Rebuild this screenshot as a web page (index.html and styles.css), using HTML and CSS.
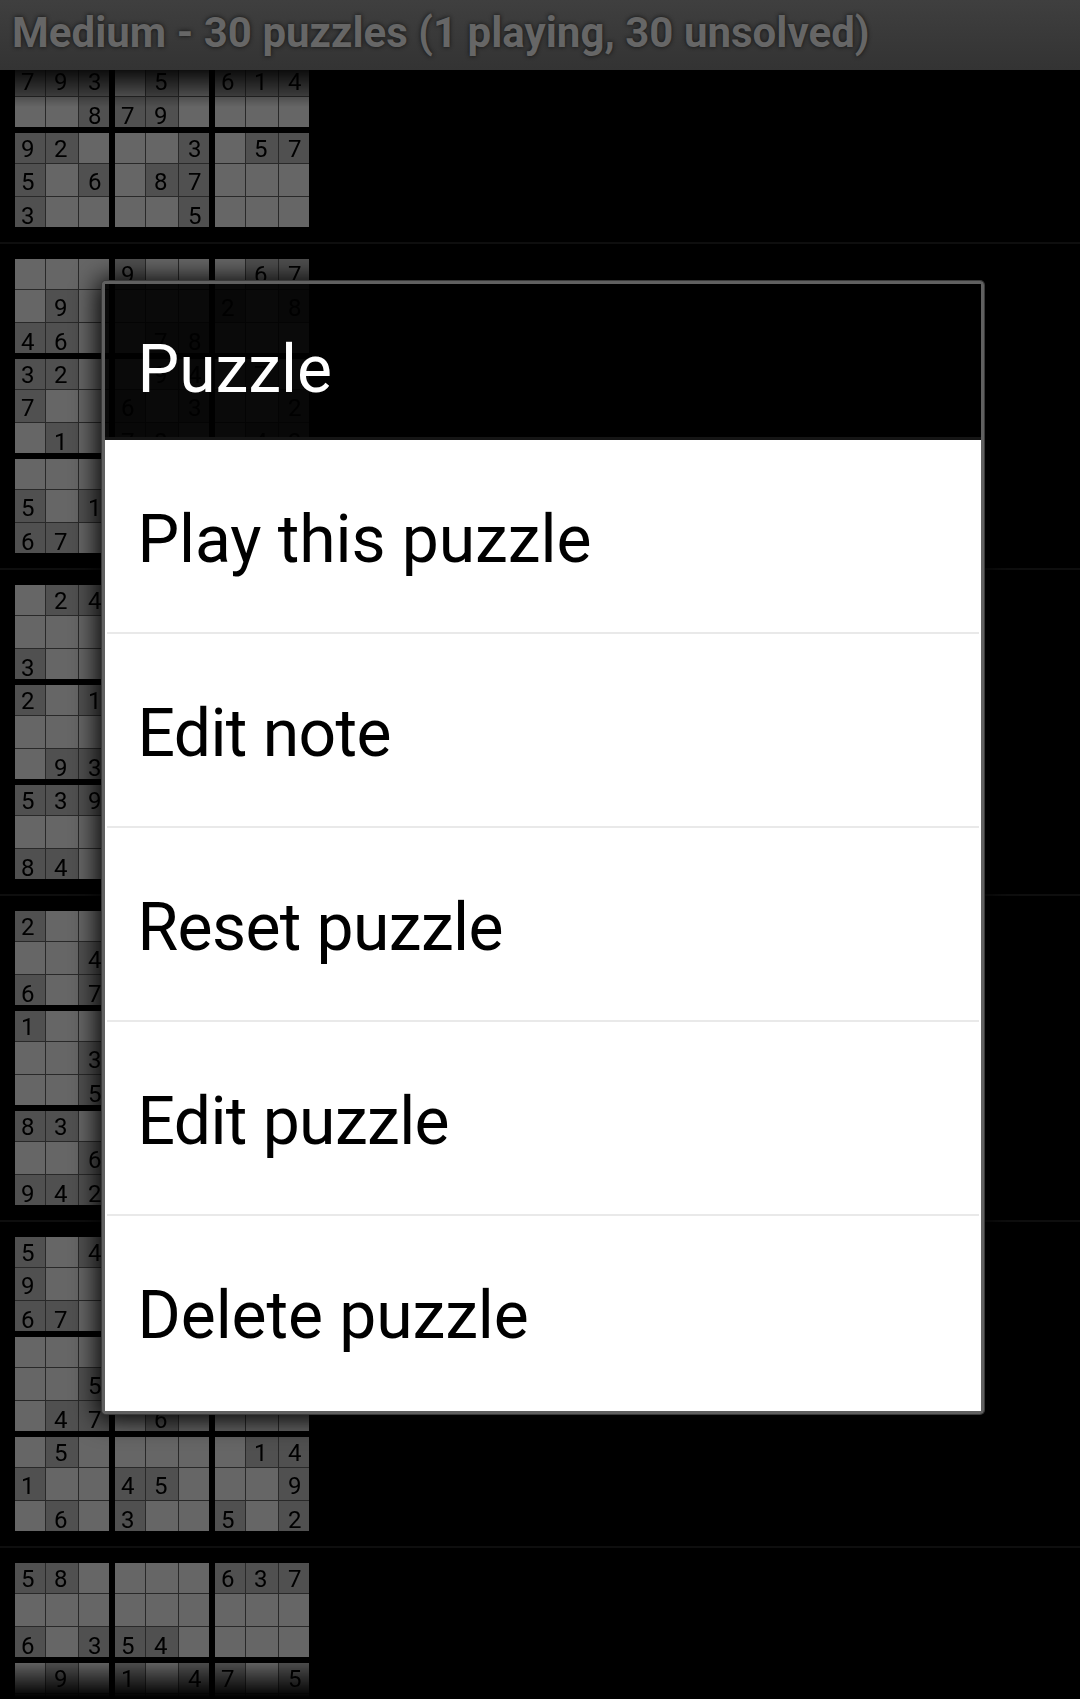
FILE: index.html
```html
<!DOCTYPE html>
<html lang="en">
<head>
<meta charset="utf-8">
<title>Sudoku puzzles</title>
<link rel="stylesheet" href="styles.css">
</head>
<body>
<div class="screen">
  <header class="titlebar">Medium - 30 puzzles (1 playing, 30 unsolved)</header>
  <main class="viewport"><div class="list" id="list"></div></main>
  <section class="dialog">
    <h1 class="dialog-title">Puzzle</h1>
    <ul class="menu">
      <li>Play this puzzle</li>
      <li class="tight">Edit note</li>
      <li class="tight">Reset puzzle</li>
      <li class="tight">Edit puzzle</li>
      <li>Delete puzzle</li>
    </ul>
  </section>
</div>
<script src="boards.js"></script>
</body>
</html>
```
FILE: boards.js
```js
// Nine rows of nine cells per puzzle; a dot is an empty cell.
const puzzles = [
  "......... ......... ......... ......... 793.5.614 ..879.... 92...3.57 5.6.87... 3....5...",
  "...9...67 .9....2.8 46..78... 32..94.7. 7..6.3..2 .1.78..43 ......... 5.1...... 67.......",
  ".24...... ......... 3........ 2.1...... ......... .93...... 539...... ......... 84.......",
  "2........ ..4...... 6.7...... 1........ ..3...... ..5...... 83....... ..6...... 942......",
  "5.4...... 9........ 67....... ......... ..5...... .47.6.... .5.....14 1..45...9 .6.3..5.2",
  "58....637 ......... 6.354.... .9.1.47.5 ......... ......... ......... ......... ........."
];

const list = document.getElementById("list");
for (const puzzle of puzzles) {
  const rows = puzzle.split(" ");
  const item = document.createElement("div");
  item.className = "item";
  const board = document.createElement("div");
  board.className = "board";
  for (let b = 0; b < 9; b++) {
    const box = document.createElement("div");
    box.className = "box";
    for (let c = 0; c < 9; c++) {
      const value = rows[Math.floor(b / 3) * 3 + Math.floor(c / 3)][(b % 3) * 3 + (c % 3)];
      const cell = document.createElement("div");
      cell.className = "cell";
      if (value !== ".") {
        cell.classList.add("given");
        cell.textContent = value;
      }
      box.append(cell);
    }
    board.append(box);
  }
  item.append(board);
  list.append(item);
}
```
FILE: styles.css
```css
* { box-sizing: border-box; }

body {
  margin: 0;
  background: #000;
  font-family: Roboto, sans-serif;
}

.screen {
  position: relative;
  display: flex;
  flex-direction: column;
  height: 1699px;
  overflow: hidden;
}

.titlebar {
  flex: none;
  height: 70px;
  padding-left: 12px;
  background: linear-gradient(#3f3f3f, #333);
  color: #666;
  font-size: 42px;
  font-weight: 700;
  letter-spacing: .02px;
  line-height: 65px;
  white-space: nowrap;
  text-shadow: 0 0 4px #111;
}

.viewport {
  display: flex;
  flex: 1;
  flex-direction: column;
  min-height: 0;
  overflow: hidden;
  -webkit-mask-image: linear-gradient(rgba(0,0,0,.15), #000 37px, #000 calc(100% - 38px), transparent calc(100% - 2px));
  mask-image: linear-gradient(rgba(0,0,0,.15), #000 37px, #000 calc(100% - 38px), transparent calc(100% - 2px));
}

/* The list is scrolled part of the way through its first puzzle. */
.list { margin-top: -152px; }

.item {
  padding: 15px;
  border-bottom: 2px solid #0e0e0e;
}

.board {
  display: grid;
  grid-template-columns: repeat(3, 94px);
  gap: 6px;
}

.box {
  display: grid;
  grid-template: 30px 32px 30px / 30px 32px 30px;
  gap: 1px;
  background: #292929;
}

.cell {
  background: #666;
  color: #000;
  font-size: 24px;
  line-height: 24px;
  padding: 4px 0 0 6px;
  height: 100%;
  min-height: 0;
}
.cell:nth-child(3n+2) { padding-left: 8px; }
.cell:nth-child(3n) { padding-left: 9px; }
.cell:nth-child(n+4) { padding-top: 6px; }
.cell:nth-child(n+7) { padding-top: 7px; }
.given { background: #505050; }

.dialog {
  position: absolute;
  left: 102px;
  top: 281px;
  width: 882px;
  height: 1133px;
  border: 3px solid #606060;
  border-radius: 4px;
  box-shadow: 0 0 0 1px #3a3a3a, 0 2px 26px 4px #000;
}

.dialog-title {
  height: 156px;
  margin: 0;
  padding-left: 32.5px;
  border-bottom: 3px solid #151515;
  background: rgba(0,0,0,.9);
  color: #fff;
  font-size: 66px;
  font-weight: 400;
  line-height: 171px;
}

.menu {
  margin: 0;
  padding: 0 0 1px;
  list-style: none;
  background: #fff;
  color: #000;
}
.menu li {
  height: 194px;
  margin: 0 2px;
  padding-left: 30.5px;
  border-bottom: 2px solid #e9e9e9;
  font-size: 66px;
  letter-spacing: -.08px;
  line-height: 199px;
}
.menu .tight { letter-spacing: -.6px; }
.menu li:last-child { border-bottom: 0; }
```
